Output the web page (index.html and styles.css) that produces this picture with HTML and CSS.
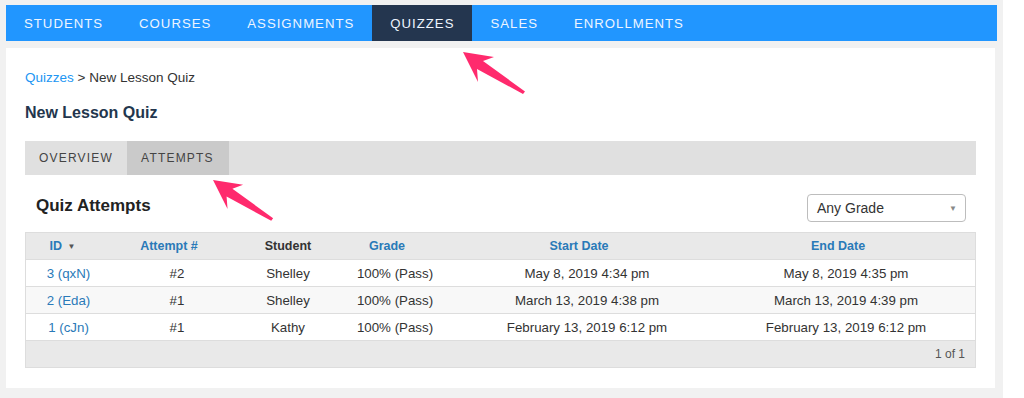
FILE: index.html
```html
<!DOCTYPE html>
<html lang="en">
<head>
    <meta charset="UTF-8">
    <meta name="viewport" content="width=device-width, initial-scale=1.0">
    <title>Quiz Attempts</title>
    <link rel="stylesheet" href="styles.css">
</head>
<body>

<div class="page">
    <nav class="main-nav">
        <a href="#">STUDENTS</a>
        <a href="#">COURSES</a>
        <a href="#">ASSIGNMENTS</a>
        <a href="#" class="active">QUIZZES</a>
        <a href="#">SALES</a>
        <a href="#">ENROLLMENTS</a>
    </nav>

    <div class="panel">
        <div class="breadcrumb">
            <a href="#">Quizzes</a> &gt; New Lesson Quiz
        </div>
        <h1 class="page-title">New Lesson Quiz</h1>

        <div class="tabs">
            <a href="#">OVERVIEW</a>
            <a href="#" class="active">ATTEMPTS</a>
        </div>

        <div class="section-head">
            <h2>Quiz Attempts</h2>
            <div class="select-box">
                <span>Any Grade</span>
                <span class="caret">&#9660;</span>
            </div>
        </div>

        <table class="attempts">
            <thead>
            <tr>
                <th class="col-id sortable">ID <span class="sort-arrow">&#9660;</span></th>
                <th class="col-attempt sortable">Attempt #</th>
                <th class="col-student">Student</th>
                <th class="col-grade sortable">Grade</th>
                <th class="col-start sortable">Start Date</th>
                <th class="col-end sortable">End Date</th>
            </tr>
            </thead>
            <tbody>
            <tr>
                <td><a href="#">3 (qxN)</a></td>
                <td>#2</td>
                <td>Shelley</td>
                <td>100% (Pass)</td>
                <td>May 8, 2019 4:34 pm</td>
                <td>May 8, 2019 4:35 pm</td>
            </tr>
            <tr>
                <td><a href="#">2 (Eda)</a></td>
                <td>#1</td>
                <td>Shelley</td>
                <td>100% (Pass)</td>
                <td>March 13, 2019 4:38 pm</td>
                <td>March 13, 2019 4:39 pm</td>
            </tr>
            <tr>
                <td><a href="#">1 (cJn)</a></td>
                <td>#1</td>
                <td>Kathy</td>
                <td>100% (Pass)</td>
                <td>February 13, 2019 6:12 pm</td>
                <td>February 13, 2019 6:12 pm</td>
            </tr>
            </tbody>
        </table>
        <div class="table-footer">1 of 1</div>
    </div>
</div>

<!-- annotation arrows drawn over the screenshot -->
<svg class="arrows" width="1024" height="398" viewBox="0 0 1024 398">
    <defs>
        <path id="arrow" d="M0 0 L31 5 L20 9 L62 39.5 L60 42 L14 17 L15 30 Z"/>
    </defs>
    <use href="#arrow" transform="translate(463 52)"/>
    <use href="#arrow" transform="translate(213 180) scale(0.97)"/>
</svg>

</body>
</html>
```

FILE: styles.css
```css
body {
    font-family: "Liberation Sans", Arial, sans-serif;
    margin: 0;
    padding: 0;
    background-color: #ffffff;
    color: #333;
}

a {
    text-decoration: none;
}

.page {
    width: 991px;
    padding: 5px 6px 10px 6px;
    background-color: #f1f1f1;
}

.main-nav {
    display: flex;
    height: 36px;
    background-color: #2196ff;
}

.main-nav a {
    display: flex;
    align-items: center;
    padding: 0 18px;
    color: #eef5ff;
    font-size: 13.2px;
    letter-spacing: 1px;
}

.main-nav a.active {
    background-color: #24364f;
}

.panel {
    margin-top: 7px;
    margin-right: 2px;
    background-color: #ffffff;
    padding: 22px 19px 20px 19px;
}

.breadcrumb {
    font-size: 13.5px;
    line-height: 16px;
    color: #333;
}

.breadcrumb a {
    color: #2196f3;
}

.page-title {
    margin: 17px 0 0 0;
    font-size: 16px;
    line-height: 19px;
    color: #23364d;
}

.tabs {
    display: flex;
    height: 34px;
    margin-top: 19px;
    background-color: #e0e0e0;
}

.tabs a {
    display: flex;
    align-items: center;
    padding: 0 14px;
    font-size: 12px;
    letter-spacing: 1.2px;
    color: #444;
}

.tabs a.active {
    background-color: #cacaca;
    padding-right: 15px;
}

.section-head {
    display: flex;
    justify-content: space-between;
    align-items: center;
    margin-top: 19px;
    padding: 0 10px 0 11px;
}

.section-head h2 {
    margin: 0 0 5px 0;
    font-size: 17px;
    color: #222;
}

.select-box {
    display: flex;
    justify-content: space-between;
    align-items: center;
    box-sizing: border-box;
    width: 159px;
    height: 28px;
    padding: 0 8px 0 9px;
    border: 1px solid #bdbdbd;
    border-radius: 4px;
    font-size: 14px;
    color: #333;
}

.select-box .caret {
    font-size: 8px;
    color: #888;
}

.attempts {
    width: 100%;
    margin-top: 10px;
    border-collapse: collapse;
    table-layout: fixed;
    border: 1px solid #dddddd;
    font-size: 13.3px;
}

.attempts th,
.attempts td {
    height: 26px;
    padding: 0;
    text-align: center;
    border-bottom: 1px solid #dddddd;
}

.attempts th {
    background-color: #e9e9e9;
    font-size: 12.5px;
    color: #333;
}

.attempts th.sortable {
    color: #2a7ab8;
    padding-right: 16px;
}

.attempts th.col-id {
    padding-right: 12px;
}

.sort-arrow {
    font-size: 8px;
    color: #555;
    margin-left: 2px;
    vertical-align: 1px;
}

.col-id { width: 73px; }
.col-attempt { width: 116px; }
.col-student { width: 90px; }
.col-grade { width: 108px; }
.col-start { width: 244px; }

.attempts td {
    color: #333;
}

.attempts td a {
    color: #2a7ab8;
}

.attempts tbody tr:nth-child(even) td {
    background-color: #f8f8f8;
}

.table-footer {
    height: 26px;
    line-height: 26px;
    padding-right: 10px;
    text-align: right;
    font-size: 12px;
    color: #555;
    background-color: #e9e9e9;
    border: 1px solid #dddddd;
    border-top: none;
}

.arrows {
    position: absolute;
    top: 0;
    left: 0;
    pointer-events: none;
    fill: #ff2a6d;
}
```
